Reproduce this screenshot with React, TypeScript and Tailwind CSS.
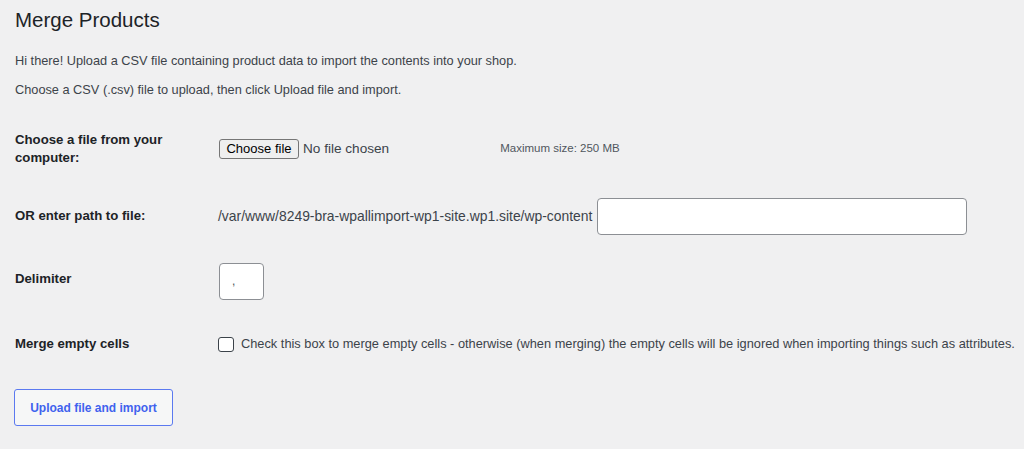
import React from "react";

export default function App() {
  return (
    <div className="w-[1024px] h-[449px] bg-[#f0f0f1] overflow-hidden text-[#3c434a] font-['Liberation_Sans',Arial,sans-serif]">
      <div className="pl-[15px]">
        <h1 className="pt-[9px] text-[20.5px] leading-[22px] text-[#1d2327] font-normal">Merge Products</h1>
        <p className="mt-[22px] text-[12.75px] leading-[16px]">
          Hi there! Upload a CSV file containing product data to import the contents into your shop.
        </p>
        <p className="mt-[13px] text-[12.75px] leading-[16px]">
          Choose a CSV (.csv) file to upload, then click Upload file and import.
        </p>

        <div className="mt-[31px] flex items-center h-[40px]">
          <div className="w-[204px] text-[13.2px] leading-[18px] font-bold text-[#1d2327]">
            Choose a file from your
            <br />
            computer:
          </div>
          <div className="flex items-center">
            <button className="h-[20px] w-[80px] border border-[#767676] rounded-[3px] bg-[#efefef] text-[13px] leading-[18px] text-black">
              Choose file
            </button>
            <span className="ml-[4px] text-[13.6px] text-[#3c434a]">No file chosen</span>
            <span className="ml-[111px] text-[11.5px] text-[#50575e]">Maximum size: 250 MB</span>
          </div>
        </div>

        <div className="mt-[27px] flex items-center h-[40px]">
          <div className="w-[203px] text-[13.2px] font-bold text-[#1d2327]">OR enter path to file:</div>
          <span className="text-[13.9px] text-[#3c434a]">/var/www/8249-bra-wpallimport-wp1-site.wp1.site/wp-content</span>
          <input
            type="text"
            className="ml-[5px] w-[370px] h-[37px] bg-white border border-[#8c8f94] rounded-[4px]"
          />
        </div>

        <div className="mt-[25px] flex items-center h-[40px]">
          <div className="w-[204px] -mt-[4px] text-[13.2px] font-bold text-[#1d2327]">Delimiter</div>
          <input
            type="text"
            defaultValue=","
            className="w-[45px] h-[37px] bg-white border border-[#8c8f94] rounded-[4px] pl-[12px] text-[12px] text-[#50575e] outline-none"
          />
        </div>

        <div className="mt-[23px] flex items-center h-[40px]">
          <div className="w-[203px] text-[13.2px] font-bold text-[#1d2327]">Merge empty cells</div>
          <span className="w-[16px] h-[15px] border border-[#3c434a] rounded-[3px] bg-white" />
          <span className="ml-[7px] text-[12.8px] text-[#3c434a] whitespace-nowrap">
            Check this box to merge empty cells - otherwise (when merging) the empty cells will be ignored when importing things such as attributes.
          </span>
        </div>

        <button className="mt-[25px] -ml-[1px] w-[159px] h-[37px] border border-[#5b79f0] rounded-[3px] bg-[#f6f7f7] text-[12px] font-bold text-[#3f62ee]">
          Upload file and import
        </button>
      </div>
    </div>
  );
}
